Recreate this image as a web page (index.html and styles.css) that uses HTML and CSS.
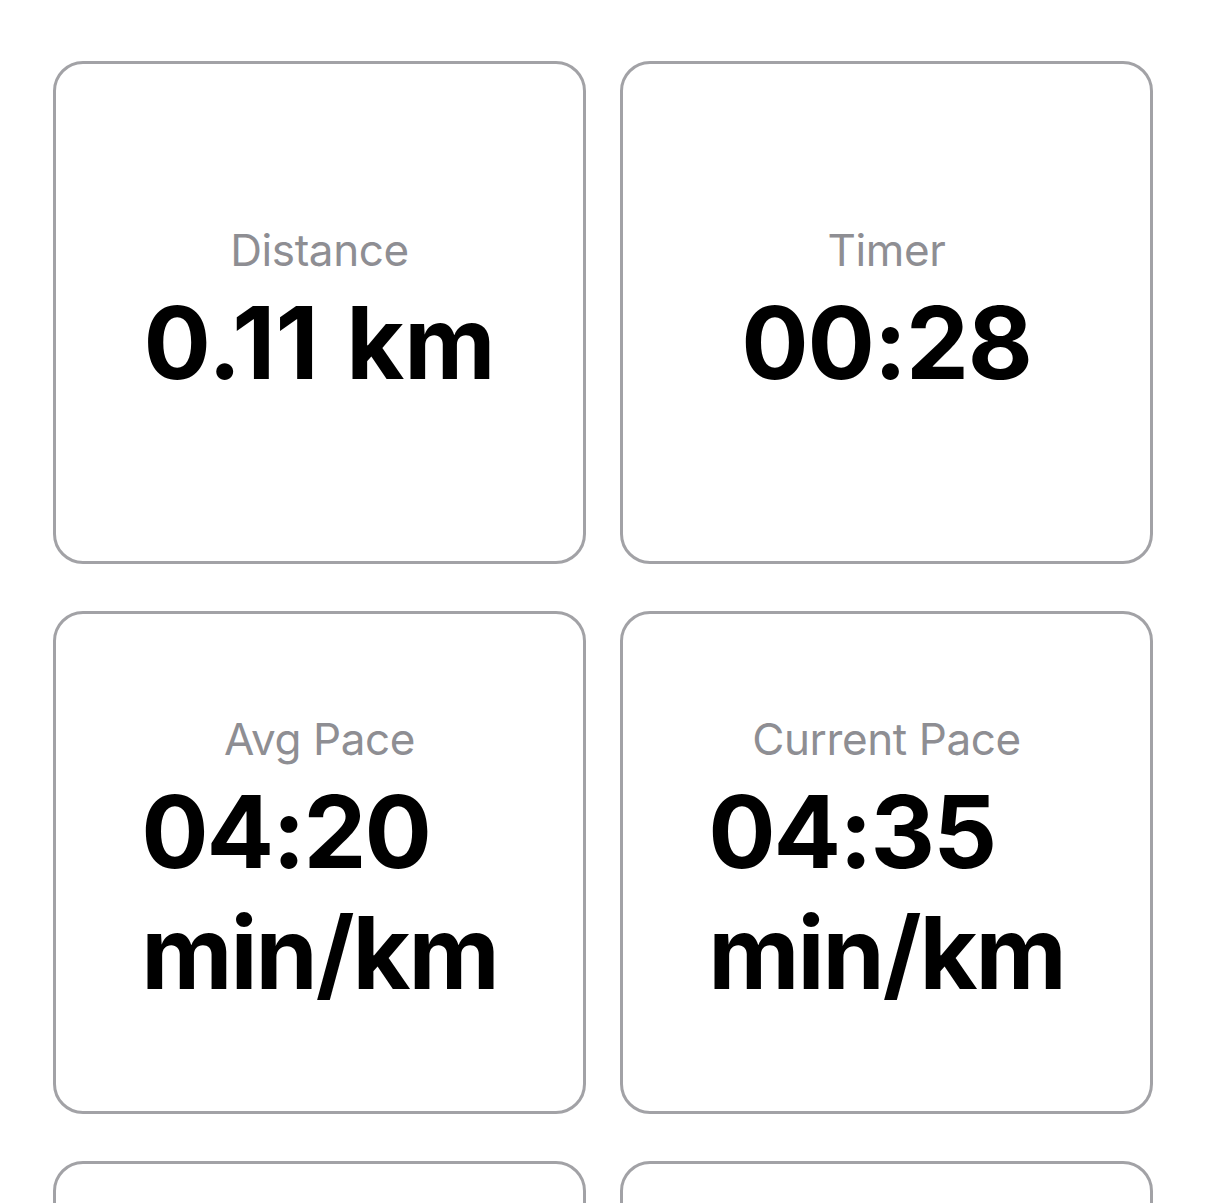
FILE: index.html
```html
<!DOCTYPE html>
<html lang="en">
<head>
<meta charset="utf-8">
<title>Workout</title>
<link rel="stylesheet" href="styles.css">
</head>
<body>
<main class="grid">
  <section class="card">
    <div class="label">Distance</div>
    <div class="value value-dist">0.11 km</div>
  </section>
  <section class="card">
    <div class="label">Timer</div>
    <div class="value">00:28</div>
  </section>
  <section class="card">
    <div class="label">Avg Pace</div>
    <div class="value value-wrap">04:20 min/km</div>
  </section>
  <section class="card">
    <div class="label">Current Pace</div>
    <div class="value value-wrap">04:35 min/km</div>
  </section>
  <section class="card"></section>
  <section class="card"></section>
</main>
</body>
</html>
```
FILE: styles.css
```css
html, body {
  margin: 0;
  padding: 0;
  background: #ffffff;
}
body {
  font-family: Inter, "Liberation Sans", Arial, sans-serif;
  color: #000000;
}
.grid {
  display: grid;
  grid-template-columns: 533px 533px;
  column-gap: 34px;
  row-gap: 47px;
  padding: 61px 52px 0 53px;
}
.card {
  box-sizing: border-box;
  height: 503px;
  border: 3px solid #a2a2a6;
  border-radius: 30px;
  display: flex;
  flex-direction: column;
  align-items: center;
  justify-content: center;
  gap: 5px;
}
.label {
  font-size: 44px;
  font-weight: 400;
  color: #8e8e93;
  letter-spacing: -0.4px;
}
.value {
  font-size: 100px;
  font-weight: 700;
  letter-spacing: -1.2px;
  white-space: nowrap;
}
.value-dist {
  word-spacing: 4px;
  letter-spacing: 0;
}
.value-wrap {
  white-space: normal;
  width: min-content;
  text-align: left;
  letter-spacing: -2px;
}
```
